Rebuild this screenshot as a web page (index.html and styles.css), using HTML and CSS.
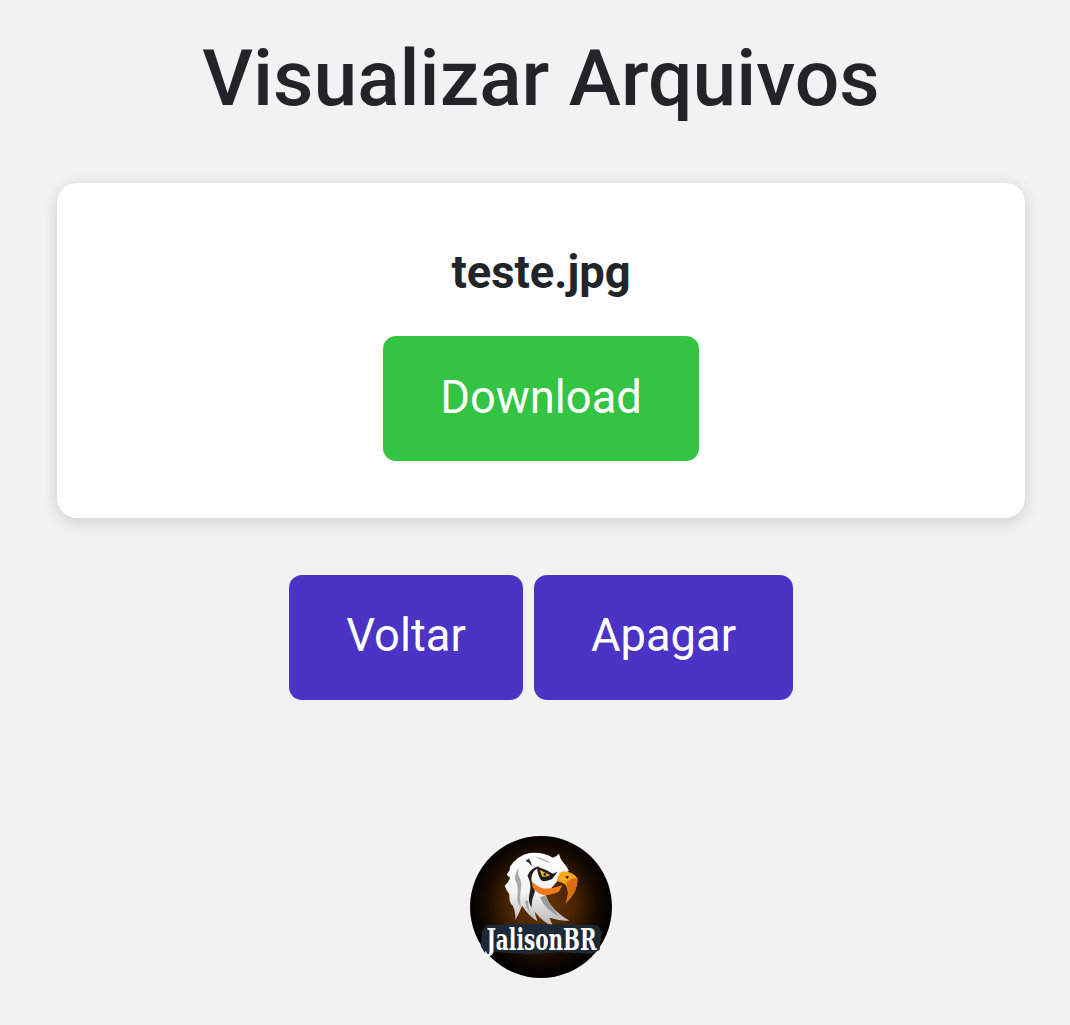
FILE: index.html
```html
<!DOCTYPE html>
<html lang="pt-BR">
<head>
  <meta charset="UTF-8" />
  <meta name="viewport" content="width=device-width, initial-scale=1.0" />
  <title>Visualizar Arquivos</title>
  <link rel="stylesheet" href="styles.css">
</head>
<body>
  <div class="container">
    <h1>Visualizar Arquivos</h1>

    <!-- Arquivo -->
    <div class="card">
      <h2>teste.jpg</h2>
      <a class="btn btn-green" href="#">Download</a>
    </div>

    <!-- Acoes -->
    <div class="actions">
      <a class="btn btn-purple btn-voltar" href="#">Voltar</a>
      <a class="btn btn-purple btn-apagar" href="#">Apagar</a>
    </div>

    <!-- Logo -->
    <div class="logo">
      <svg viewBox="30 31 425 425" width="142" height="142">
        <defs>
          <radialGradient id="glow" cx="50%" cy="48%" r="50%">
            <stop offset="0" stop-color="#693403" />
            <stop offset="0.45" stop-color="#4a2502" />
            <stop offset="0.8" stop-color="#140900" />
            <stop offset="1" stop-color="#020100" />
          </radialGradient>
          <linearGradient id="feather" x1="0" y1="0" x2="0" y2="1">
            <stop offset="0" stop-color="#ffffff" />
            <stop offset="0.55" stop-color="#f2f2f2" />
            <stop offset="1" stop-color="#b4b4b4" />
          </linearGradient>
        </defs>
        <circle cx="242.5" cy="243.5" r="212.5" fill="url(#glow)" />
        <!-- cabeca -->
        <path fill="url(#feather)" d="M150 122 Q172 90 208 82 Q248 78 278 96 Q290 92 296 84 Q300 102 312 114 Q322 124 326 136 L296 150 L290 168 L256 206 Q266 240 300 266 Q314 278 328 284 Q298 286 268 276 Q272 290 280 302 Q252 294 224 258 Q226 272 232 286 Q208 274 186 240 Q178 262 166 282 Q166 256 158 240 Q146 230 148 206 Q138 194 134 180 Q146 170 150 156 Q142 150 140 146 Q150 136 150 122 Z" />
        <!-- sombras das penas -->
        <path fill="#222" d="M202 150 Q216 176 208 204 Q202 226 214 246 Q214 222 222 204 Q228 192 216 172 Q210 152 222 136 L238 122 Q212 124 202 150 Z" />
        <path fill="#a8a8a8" d="M164 160 Q176 180 172 212 Q170 232 182 244 Q178 214 182 190 Q186 168 176 150 Q172 136 178 126 Q166 136 164 160 Z" />
        <path fill="#a2a2a2" d="M196 224 Q194 244 212 262 Q202 240 204 224 Z" />
        <path fill="#9a9a9a" d="M240 214 Q250 246 300 276 Q270 240 256 208 Z" />
        <path fill="#333" d="M196 106 Q208 110 216 122 Q214 108 206 98 Z" />
        <path fill="#b8b8b8" d="M224 92 Q252 96 272 112 Q250 108 224 92 Z" />
        <!-- olho -->
        <path fill="#1a1a1a" d="M230 122 Q256 130 278 144 L292 138 L276 160 Q260 168 246 166 Q234 156 230 122 Z" />
        <path fill="#f6b61d" d="M238 132 L270 148 Q258 156 246 152 Z" />
        <circle cx="254" cy="146" r="4" fill="#1a1a1a" />
        <!-- bico -->
        <path fill="#f27a1a" d="M214 166 Q232 184 250 188 Q280 190 306 178 L296 198 Q272 208 254 208 Q230 204 218 186 Z" />
        <path fill="#f8a81e" d="M290 166 L298 142 Q308 134 320 138 Q338 140 352 158 Q352 180 344 196 Q332 218 316 232 Q326 208 322 192 L316 176 L304 170 Z" />
        <path fill="#d96f10" d="M318 172 Q330 154 352 158 Q352 180 344 196 Q332 218 316 232 Q326 208 322 192 Z" />
        <path fill="#2a1a08" d="M314 152 L326 150 L322 160 Z" />
        <!-- nome -->
        <path fill="#1f2935" d="M78 298 L160 294 L330 296 L412 298 L424 318 L418 372 L392 384 L300 378 L210 386 L110 378 L76 384 L62 360 L66 316 Z" />
        <text class="logo-text" transform="translate(244 371) scale(0.68 1)">JalisonBR</text>
      </svg>
    </div>
  </div>
</body>
</html>
```

FILE: styles.css
```css
body { font-family: "Roboto", sans-serif; background: #f2f2f2; margin: 0; padding: 0; }
.container { display: flex; flex-direction: column; align-items: stretch; padding: 0 45px 0 57px; height: 1025px; box-sizing: border-box; overflow: hidden; }
h1 { margin: 30px 0 0; font-size: 78.6px; line-height: 96px; font-weight: 500; color: #212529; text-align: center; }
.card { display: flex; flex-direction: column; align-items: center; margin-top: 57px; height: 335px; box-sizing: border-box; padding-top: 61px; background: white; border-radius: 20px; box-shadow: 0 4px 16px rgba(0,0,0,0.15); }
h2 { margin: 0 0 34px; font-size: 45.3px; line-height: 58px; font-weight: 700; color: #212529; }
.btn { display: flex; align-items: center; justify-content: center; height: 125px; box-sizing: border-box; border-radius: 13px; color: white; font-size: 45.3px; text-decoration: none; }
.btn-green { background: #33c443; width: 316px; padding-bottom: 2px; }
.btn-purple { background: #4b33c5; padding-bottom: 5px; }
.btn-voltar { width: 234px; }
.btn-apagar { width: 259px; }
.actions { display: flex; justify-content: center; gap: 11px; margin-top: 57px; }
.logo { display: flex; justify-content: center; margin-top: 136px; }
.logo svg { display: block; }
.logo-text { font-family: "DejaVu Serif", serif; font-weight: 700; font-size: 88px; fill: white; text-anchor: middle; }
```
